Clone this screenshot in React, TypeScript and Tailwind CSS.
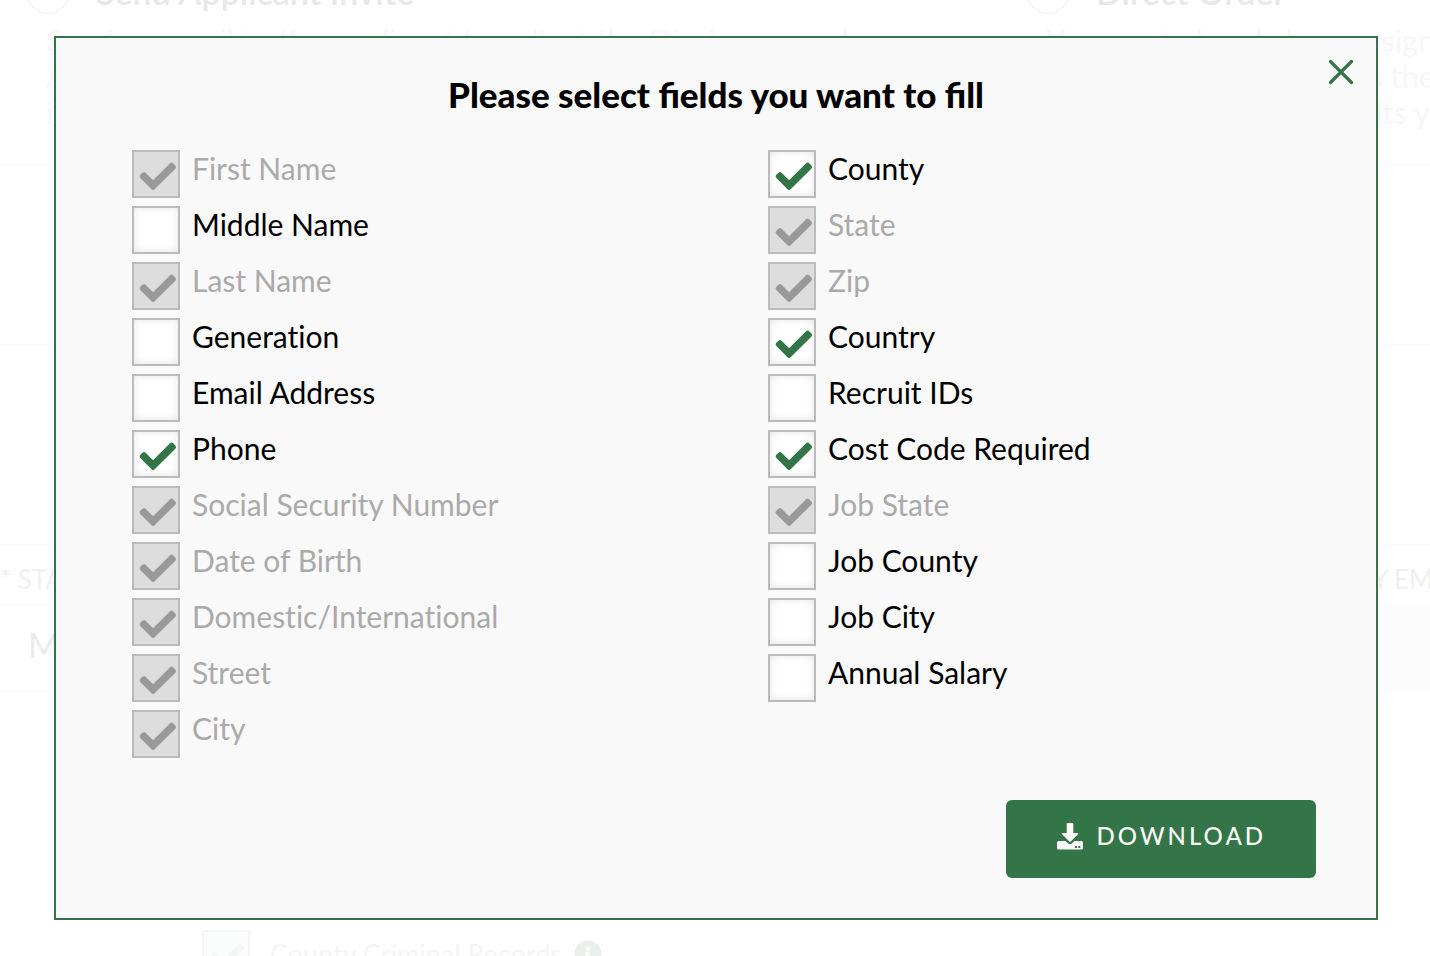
import { useState } from 'react'
import { FaInfoCircle } from 'react-icons/fa'

type Field = { label: string; checked?: boolean; locked?: boolean }

const leftFields: Field[] = [
  { label: 'First Name', checked: true, locked: true },
  { label: 'Middle Name' },
  { label: 'Last Name', checked: true, locked: true },
  { label: 'Generation' },
  { label: 'Email Address' },
  { label: 'Phone', checked: true },
  { label: 'Social Security Number', checked: true, locked: true },
  { label: 'Date of Birth', checked: true, locked: true },
  { label: 'Domestic/International', checked: true, locked: true },
  { label: 'Street', checked: true, locked: true },
  { label: 'City', checked: true, locked: true },
]

const rightFields: Field[] = [
  { label: 'County', checked: true },
  { label: 'State', checked: true, locked: true },
  { label: 'Zip', checked: true, locked: true },
  { label: 'Country', checked: true },
  { label: 'Recruit IDs' },
  { label: 'Cost Code Required', checked: true },
  { label: 'Job State', checked: true, locked: true },
  { label: 'Job County' },
  { label: 'Job City' },
  { label: 'Annual Salary' },
]

function Tick({ className }: { className: string }) {
  return (
    <svg viewBox="0 0 48 48" className={className} aria-hidden="true">
      <path
        d="M9.900 26.400 12 24.300 21.100 33.400 39.600 14.900 41.800 17.100 21.100 37.800Z"
        fill="currentColor"
        stroke="currentColor"
        strokeWidth="4.4"
        strokeLinejoin="round"
      />
    </svg>
  )
}

function FieldCheckbox({ label, checked = false, locked = false }: Field) {
  const [on, setOn] = useState(checked)

  return (
    <li>
      <label className={`flex items-start gap-3 ${locked ? 'text-[#aaaaaa]' : 'cursor-pointer text-black'}`}>
        <span className="grid size-12 shrink-0">
          <input
            type="checkbox"
            checked={on}
            disabled={locked}
            onChange={(e) => setOn(e.target.checked)}
            className="peer col-start-1 row-start-1 size-12 appearance-none border-2 border-[#bbbbbb] bg-white shadow-[inset_0_0_8px_rgba(0,0,0,0.1)] disabled:bg-[#dddddd] disabled:shadow-none"
          />
          <Tick className="pointer-events-none col-start-1 row-start-1 hidden size-12 text-[#337547] peer-checked:block peer-disabled:text-[#999999]" />
        </span>
        <span className="text-[30px] leading-9 [font-variant-ligatures:none]">{label}</span>
      </label>
    </li>
  )
}

function FieldList({ fields }: { fields: Field[] }) {
  return (
    <ul className="flex flex-col gap-2">
      {fields.map((field) => (
        <FieldCheckbox key={field.label} {...field} />
      ))}
    </ul>
  )
}

function OrderOption({ title, lines }: { title: string; lines: string[] }) {
  return (
    <div className="w-[1000px] shrink-0">
      <div className="flex items-center gap-[26px] pl-[26px]">
        <span className="size-11 rounded-full border-2 border-[#f5f5f5]" />
        <h2 className="text-[34px] leading-[44px] font-semibold text-[#e8e8e8]">{title}</h2>
      </div>
      <p className="mt-2 pl-[46px] text-[31px] leading-9 text-[#f7f7f7]">
        {lines.map((line) => (
          <span key={line} className="block whitespace-nowrap">
            {line}
          </span>
        ))}
      </p>
    </div>
  )
}

// The order page, washed out while the dialog is open
function OrderPage() {
  return (
    <div className="absolute inset-0 overflow-hidden" aria-hidden="true">
      <div className="-mt-[30px] flex border-b-2 border-[#fbfbfb] pb-[34px]">
        <OrderOption
          title="Send Applicant Invite"
          lines={[
            'Send an email to the applicant to collect the Disclosure and',
            'Authorization forms and any other',
            'information needed for the order',
          ]}
        />
        <OrderOption
          title="Direct Order"
          lines={[
            'You must already have a signed',
            'documents from uploads the order',
            'the applicants and submits your',
          ]}
        />
      </div>
      <div className="h-[180px] border-b-2 border-[#fbfbfb]" />
      <div className="h-[198px]" />
      <table className="w-full table-fixed">
        <thead>
          <tr className="h-[60px] border-y-2 border-[#fbfbfb] text-left text-[26px] text-[#f0f0f0]">
            <th className="w-1/2 pt-2 font-normal">* STATE</th>
            <th />
            <th className="w-[150px] pt-2 font-normal whitespace-nowrap">COUNTY EMPLOYMENT</th>
          </tr>
        </thead>
        <tbody>
          <tr className="h-[86px] border-b-2 border-[#fbfbfb] text-[34px] text-[#ebebeb]">
            <td className="pb-2 pl-7">Minnesota</td>
            <td />
            <td className="bg-[#fcfcfc]" />
          </tr>
        </tbody>
      </table>
      <div className="mt-[238px] flex items-center pl-[202px]">
        <span className="size-12 border-2 border-[#f7f7f7] bg-[#fbfdfc]">
          <Tick className="size-11 text-[#f5f5f5]" />
        </span>
        <span className="ml-5 text-[27px] leading-[48px] text-[#f5f5f5]">County Criminal Records</span>
        <FaInfoCircle className="ml-3 size-7 text-[#eaf1ec]" />
      </div>
    </div>
  )
}

export default function App() {
  return (
    <div className="relative min-h-screen overflow-hidden bg-white font-['Lato',sans-serif]">
      <OrderPage />

      <div className="relative pt-9 pr-[52px] pb-9 pl-[54px]">
        <form
          role="dialog"
          aria-labelledby="fields-title"
          onSubmit={(e) => e.preventDefault()}
          className="relative border-2 border-[#337547] bg-[#f9f9f9] pt-8 pb-10"
        >
          <button type="button" aria-label="Close" className="absolute top-5 right-[21px] text-[#337547]">
            <svg viewBox="0 0 28 28" className="size-7" aria-hidden="true">
              <path d="M3.500 3.500 24.500 24.500M24.500 3.500 3.500 24.500" stroke="currentColor" strokeWidth="3.200" strokeLinecap="round" />
            </svg>
          </button>

          <h1 id="fields-title" className="text-center text-[35px] leading-[48px] font-black text-black">
            Please select fields you want to fill
          </h1>

          <div className="mt-8 grid grid-cols-2 gap-x-18 pr-11 pl-19">
            <FieldList fields={leftFields} />
            <FieldList fields={rightFields} />
          </div>

          <div className="mt-[42px] flex justify-end pr-15">
            <button
              type="submit"
              className="flex items-center gap-3 rounded-md bg-[#337547] px-[50px] pt-[18px] pb-6 text-[#f9f9f9]"
            >
              <svg viewBox="0 0 28 28" className="size-7" fill="currentColor" aria-hidden="true">
                <path d="M10.700 1.500Q10.700 1 11.200 1H16.800Q17.300 1 17.300 1.500V11H21.500Q23 11 22 12.200L14.700 19.600Q14 20.300 13.300 19.600L6 12.200Q5 11 6.500 11H10.700Z" />
                <path
                  fillRule="evenodd"
                  d="M2.500 19H9.500L12.300 21.600Q14 23 15.700 21.600L18.500 19H25.500Q27 19 27 20.500V26Q27 27.500 25.500 27.500H2.500Q1 27.500 1 26V20.500Q1 19 2.500 19ZM19 24V26H21V24ZM22.300 24V26H24.300V24Z"
                />
              </svg>
              <span className="text-2xl leading-9 font-medium tracking-[3px]">DOWNLOAD</span>
            </button>
          </div>
        </form>
      </div>
    </div>
  )
}
